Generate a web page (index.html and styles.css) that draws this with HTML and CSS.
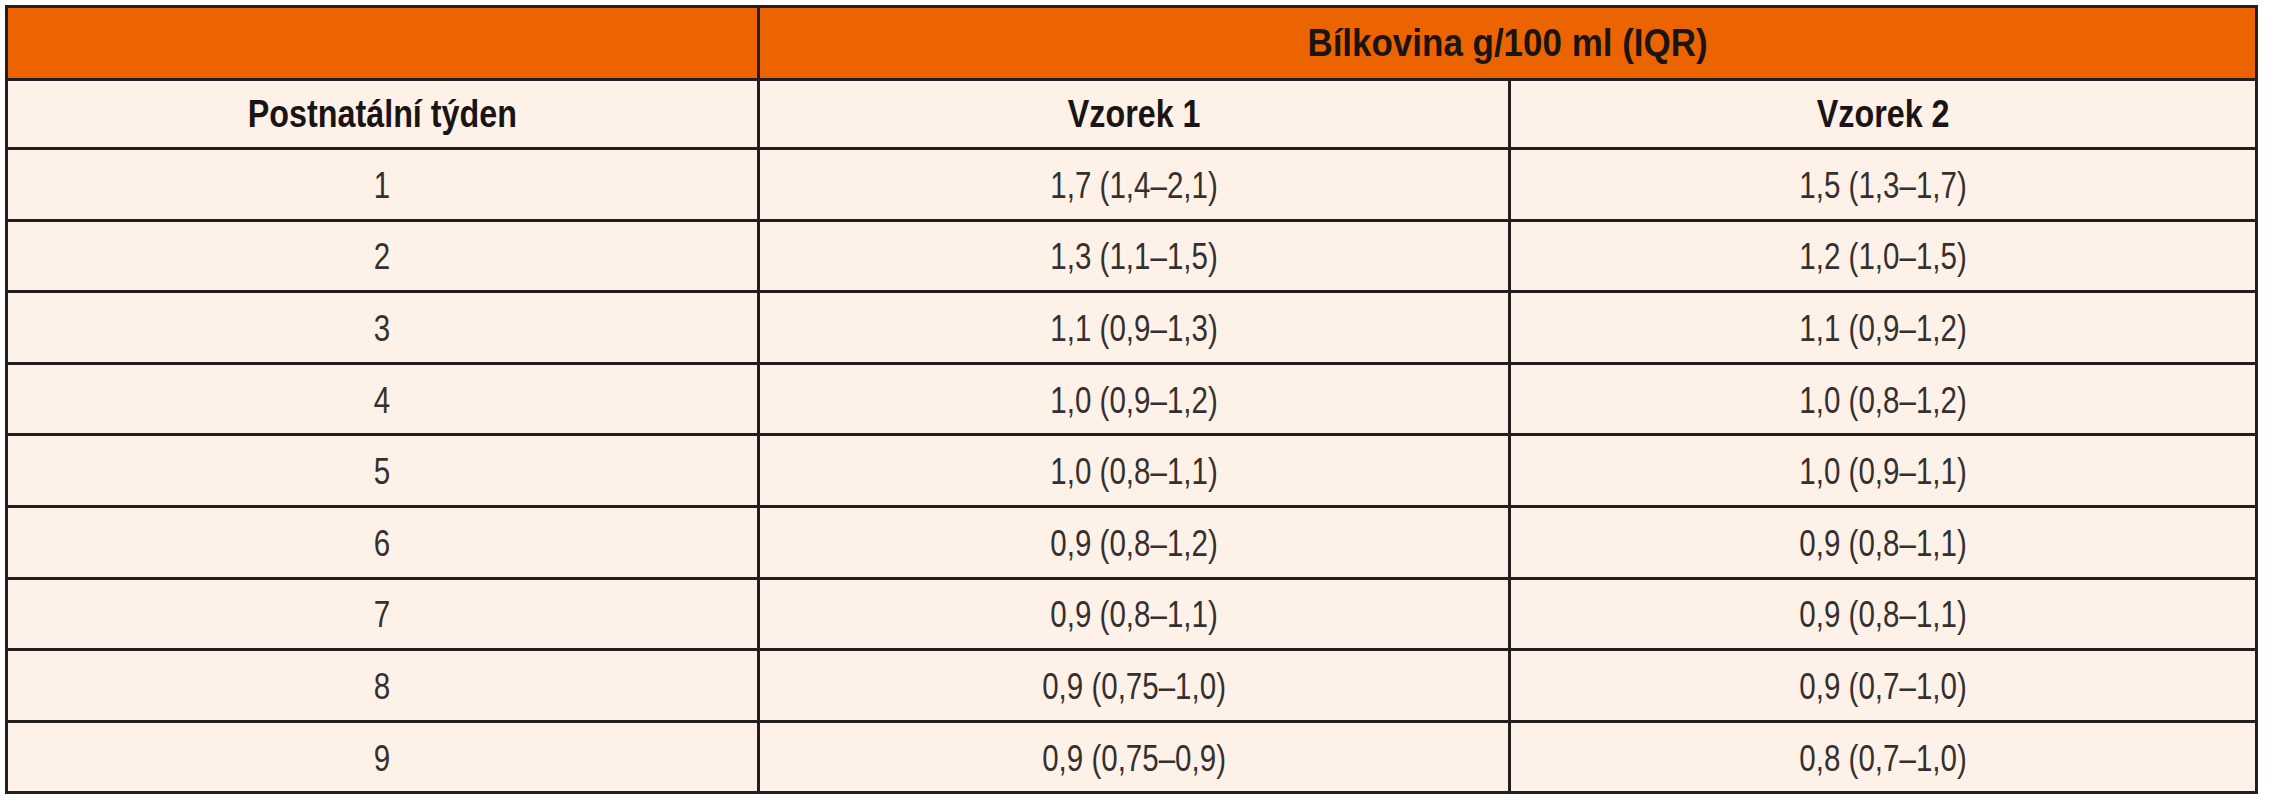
FILE: index.html
```html
<!DOCTYPE html>
<html lang="cs">
<head>
<meta charset="utf-8">
<title>Bílkovina g/100 ml</title>
<link rel="stylesheet" href="styles.css">
</head>
<body>
<div class="page">
<table class="data-table">
  <colgroup>
    <col class="c1"><col class="c2"><col class="c3">
  </colgroup>
  <thead>
    <tr class="head-top">
      <th></th>
      <th colspan="2"><span class="t">Bílkovina g/100 ml (IQR)</span></th>
    </tr>
    <tr class="head-sub">
      <th><span class="t">Postnatální týden</span></th>
      <th><span class="t">Vzorek 1</span></th>
      <th><span class="t">Vzorek 2</span></th>
    </tr>
  </thead>
  <tbody>
    <tr><td><span class="t">1</span></td><td><span class="t">1,7 (1,4–2,1)</span></td><td><span class="t">1,5 (1,3–1,7)</span></td></tr>
    <tr><td><span class="t">2</span></td><td><span class="t">1,3 (1,1–1,5)</span></td><td><span class="t">1,2 (1,0–1,5)</span></td></tr>
    <tr><td><span class="t">3</span></td><td><span class="t">1,1 (0,9–1,3)</span></td><td><span class="t">1,1 (0,9–1,2)</span></td></tr>
    <tr><td><span class="t">4</span></td><td><span class="t">1,0 (0,9–1,2)</span></td><td><span class="t">1,0 (0,8–1,2)</span></td></tr>
    <tr><td><span class="t">5</span></td><td><span class="t">1,0 (0,8–1,1)</span></td><td><span class="t">1,0 (0,9–1,1)</span></td></tr>
    <tr><td><span class="t">6</span></td><td><span class="t">0,9 (0,8–1,2)</span></td><td><span class="t">0,9 (0,8–1,1)</span></td></tr>
    <tr><td><span class="t">7</span></td><td><span class="t">0,9 (0,8–1,1)</span></td><td><span class="t">0,9 (0,8–1,1)</span></td></tr>
    <tr><td><span class="t">8</span></td><td><span class="t">0,9 (0,75–1,0)</span></td><td><span class="t">0,9 (0,7–1,0)</span></td></tr>
    <tr><td><span class="t">9</span></td><td><span class="t">0,9 (0,75–0,9)</span></td><td><span class="t">0,8 (0,7–1,0)</span></td></tr>
  </tbody>
</table>
</div>
</body>
</html>
```

FILE: styles.css
```css
html, body {
  margin: 0;
  padding: 0;
  background: #ffffff;
}

.page {
  padding: 5px 0 0 5px;
}

.data-table {
  width: 2250px;
  border-collapse: collapse;
  table-layout: fixed;
  background: #fef2e8;
  font-family: "Liberation Sans", Arial, sans-serif;
  color: #231f20;
  border: 3px solid #231f20;
}

.c1 { width: 752px; }
.c2 { width: 751px; }
.c3 { width: 747px; }

.data-table th,
.data-table td {
  border: 3px solid #231f20;
  text-align: center;
  vertical-align: middle;
  padding: 0;
  line-height: 1;
}

.t {
  display: inline-block;
  white-space: nowrap;
}

.data-table th {
  font-weight: bold;
  font-size: 38px;
  color: #1a1414;
}

.data-table th .t {
  transform: scaleX(0.85);
}

.head-top th {
  background: #eb6400;
  height: 70px;
}

.data-table .head-top th .t {
  transform: scaleX(0.92);
}

.head-sub th {
  height: 66px;
}

.data-table td {
  height: 65.6px;
  font-size: 36px;
  font-weight: normal;
  color: #353030;
  padding-top: 3px;
}

.data-table td .t {
  transform: scaleX(0.82);
}
```
